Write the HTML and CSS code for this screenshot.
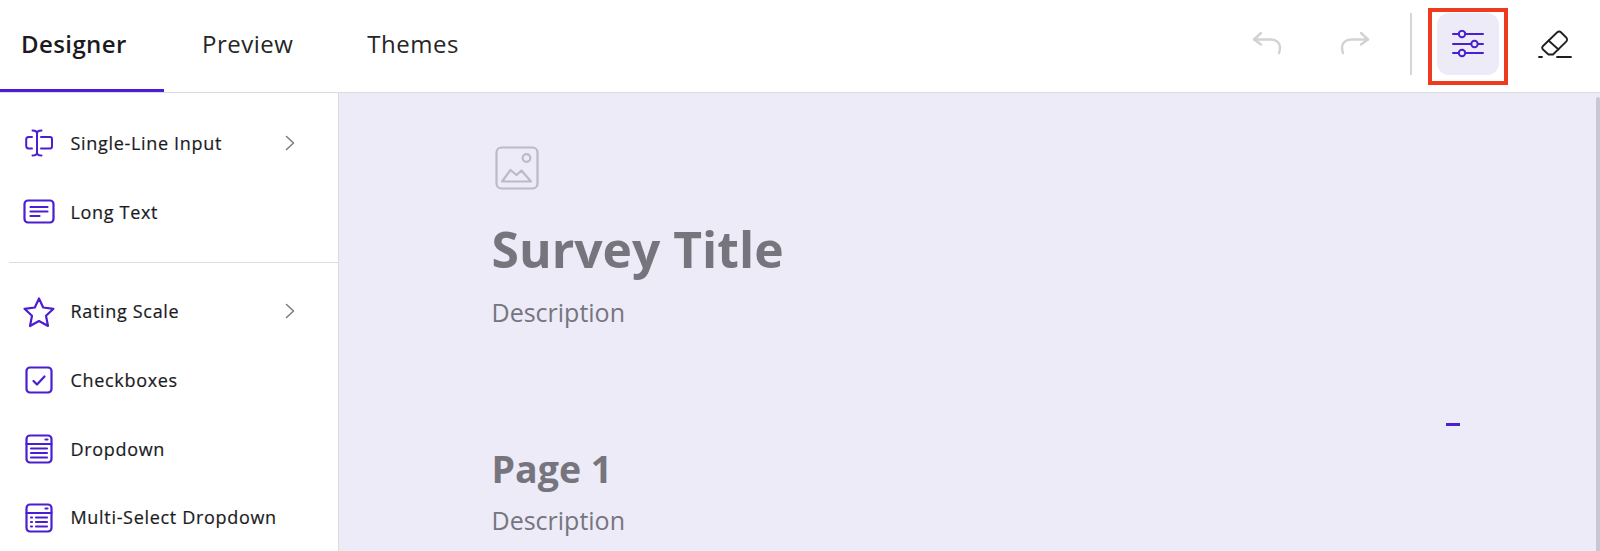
FILE: index.html
```html
<!DOCTYPE html>
<html lang="en">
<head>
  <meta charset="UTF-8">
  <meta name="viewport" content="width=device-width, initial-scale=1.0">
  <title>Survey Designer</title>
  <link rel="stylesheet" href="styles.css">
</head>
<body>
  <header class="topbar">
    <nav class="tabs">
      <a class="tab tab-active">Designer</a>
      <a class="tab tab-preview">Preview</a>
      <a class="tab tab-themes">Themes</a>
    </nav>
    <div class="actions">
      <svg class="history" viewBox="0 0 30 24" width="30" height="24" fill="none" stroke="#d2d2d2" stroke-width="2.4" stroke-linecap="round" stroke-linejoin="round">
        <path d="M9 2 2 8.500l7 5"/>
        <path d="M2 8.500h17c5.500 0 9 3.500 9 8 0 2-.5 4-1 5.500"/>
      </svg>
      <svg class="history" viewBox="0 0 30 24" width="30" height="24" fill="none" stroke="#d2d2d2" stroke-width="2.4" stroke-linecap="round" stroke-linejoin="round">
        <path d="m21 2 7 6.500-7 5"/>
        <path d="M28 8.500H11c-5.500 0-9 3.500-9 8 0 2 .5 4 1 5.500"/>
      </svg>
      <span class="divider"></span>
      <div class="highlight">
        <button class="settings">
          <svg viewBox="0 0 32 28" width="32" height="28" fill="none" stroke="#4b1fd1" stroke-width="2" stroke-linecap="round">
            <path d="M1 4h5M14 4h17M1 14h18M26 14h5M1 23h5M14 23h17"/>
            <circle cx="10" cy="4" r="3.200"/>
            <circle cx="22.500" cy="14" r="3.200"/>
            <circle cx="10" cy="23" r="3.200"/>
          </svg>
        </button>
      </div>
      <svg class="eraser" viewBox="0 0 34 30" width="34" height="30" fill="none" stroke="#1f1f1f" stroke-width="1.800" stroke-linecap="round" stroke-linejoin="round">
        <path d="M5 17 19 3.500c1.300-1.200 3-1.200 4.200 0l5 5c1.200 1.200 1.200 3 0 4.200L15 25.500h-4.500L5 20.500c-1-1-1-2.500 0-3.500Z"/>
        <path d="m10.500 11.500 10 9"/>
        <path d="M1 28h3M19 28h14"/>
      </svg>
    </div>
  </header>

  <div class="workspace">
    <aside class="sidebar">
      <ul class="group">
        <li class="item">
          <svg class="icon" viewBox="0 0 28 28" width="28" height="28" fill="none" stroke="#4b1fd1" stroke-width="2" stroke-linecap="round" stroke-linejoin="round">
            <path d="M7 8H3.500C2 8 1.200 9 1.200 10.500v6C1.200 18 2 19.500 3.500 19.500H7"/>
            <path d="M16 8h9c1.500 0 2 .5 2 2v7.500c0 1.500-.5 2-2 2h-9"/>
            <path d="M7.500 1.500c3 0 4.500 .8 4.500 3v19c0 2.200-1.500 3-4.500 3M16.500 1.500c-3 0-4.500 .8-4.500 3v19c0 2.200 1.500 3 4.500 3"/>
          </svg>
          <span class="label">Single-Line Input</span>
          <svg class="chevron" viewBox="0 0 10 16" width="10" height="16" fill="none" stroke="#7c7c7c" stroke-width="1.500" stroke-linecap="round" stroke-linejoin="round"><path d="m1.500 1.500 7 6.500-7 6.500"/></svg>
        </li>
        <li class="item">
          <svg class="icon" viewBox="0 0 32 26" width="32" height="26" fill="none" stroke="#4b1fd1" stroke-width="2.200" stroke-linecap="round" stroke-linejoin="round">
            <rect x="1.500" y="1.500" width="29" height="22" rx="3.500"/>
            <path d="M7.500 8h17M7.500 12.500h17M7.500 17h9"/>
          </svg>
          <span class="label">Long Text</span>
        </li>
      </ul>
      <hr class="rule">
      <ul class="group">
        <li class="item">
          <svg class="icon" viewBox="0 0 34 32" width="34" height="32" fill="none" stroke="#4b1fd1" stroke-width="2.200" stroke-linejoin="round">
            <path d="M17 2.500 21.200 11.500 31.500 12.800 24 19.800 26 30 17 25 8 30 10 19.800 2.500 12.800 12.800 11.500Z"/>
          </svg>
          <span class="label">Rating Scale</span>
          <svg class="chevron" viewBox="0 0 10 16" width="10" height="16" fill="none" stroke="#7c7c7c" stroke-width="1.500" stroke-linecap="round" stroke-linejoin="round"><path d="m1.500 1.500 7 6.500-7 6.500"/></svg>
        </li>
        <li class="item">
          <svg class="icon" viewBox="0 0 28 28" width="28" height="28" fill="none" stroke="#4b1fd1" stroke-width="2.200" stroke-linecap="round" stroke-linejoin="round">
            <rect x="1.500" y="1.500" width="25" height="25" rx="3.500"/>
            <path d="m8.500 15 3.500 3.500 7.500-8"/>
          </svg>
          <span class="label">Checkboxes</span>
        </li>
        <li class="item">
          <svg class="icon" viewBox="0 0 28 30" width="28" height="30" fill="none" stroke="#4b1fd1" stroke-width="2.200" stroke-linecap="round" stroke-linejoin="round">
            <rect x="1.500" y="1.500" width="25" height="27" rx="3.500"/>
            <path d="M1.500 10h25M6 14.500h16M6 19h16M6 23.500h16M20.500 5.500h2"/>
          </svg>
          <span class="label">Dropdown</span>
        </li>
        <li class="item">
          <svg class="icon" viewBox="0 0 28 30" width="28" height="30" fill="none" stroke="#4b1fd1" stroke-width="2.200" stroke-linecap="round" stroke-linejoin="round">
            <rect x="1.500" y="1.500" width="25" height="27" rx="3.500"/>
            <path d="M1.500 10h25M11 14.500h11M11 19h11M11 23.500h11M6 14.500h1M6 19h1M6 23.500h1M20.500 5.500h2"/>
          </svg>
          <span class="label">Multi-Select Dropdown</span>
        </li>
      </ul>
    </aside>

    <main class="canvas">
      <svg class="logo" viewBox="0 0 44 44" width="44" height="44" fill="none" stroke="#bbbac6" stroke-width="2.200" stroke-linecap="round" stroke-linejoin="round">
        <rect x="1.500" y="1.500" width="41" height="41" rx="5"/>
        <circle cx="31.500" cy="12" r="3.800"/>
        <path d="M7 35.500 15.500 24l6 5 5-4.500L36 35.500Z"/>
      </svg>
      <h1 class="survey-title">Survey Title</h1>
      <p class="description">Description</p>
      <h2 class="page-title">Page 1</h2>
      <p class="description description-page">Description</p>
      <span class="dash"></span>
      <span class="scrollbar"></span>
    </main>
  </div>
</body>
</html>
```

FILE: styles.css
```css
* {
  box-sizing: border-box;
}
html, body {
  height: 100%;
}
body {
  margin: 0;
  font-family: "Open Sans", "Noto Sans", sans-serif;
  color: #1b1b1f;
  background: #fff;
  overflow: hidden;
  display: flex;
  flex-direction: column;
}

/* top bar */
.topbar {
  height: 93px;
  flex: none;
  display: flex;
  justify-content: space-between;
  border-bottom: 1px solid #dcdce0;
}
.tabs {
  display: flex;
}
.tab {
  font-size: 24px;
  line-height: 88px;
  height: 92px;
  letter-spacing: .5px;
  color: #262626;
}
.tab-active {
  width: 164px;
  padding-left: 21px;
  font-weight: 600;
  letter-spacing: .4px;
  color: #1b1b1f;
  border-bottom: 3px solid #4b1fd1;
}
.tab-preview {
  margin-left: 38px;
}
.tab-themes {
  margin-left: 74px;
}
.actions {
  display: flex;
  align-items: flex-start;
  padding-right: 28px;
}
.history {
  margin-top: 31px;
  margin-right: 58px;
}
.history + .history {
  margin-right: 40px;
}
.divider {
  width: 2px;
  height: 62px;
  margin-top: 13px;
  background: #d5d5d8;
}
.highlight {
  width: 80px;
  height: 77px;
  margin: 8px 30px 0 16px;
  padding: 1px 0 0 5px;
  border: 4px solid #ee3a1f;
}
.settings {
  width: 62px;
  height: 62px;
  display: flex;
  align-items: center;
  justify-content: center;
  padding: 0;
  border: none;
  border-radius: 12px;
  background: #ecebf7;
}
.eraser {
  margin-top: 29px;
}

/* body */
.workspace {
  flex: 1;
  display: flex;
  min-height: 0;
}
.sidebar {
  width: 339px;
  flex: none;
  padding-top: 16px;
  border-right: 1px solid #dcdce0;
}
.group {
  list-style: none;
  margin: 0;
  padding: 0;
}
.item {
  height: 68.700px;
  display: flex;
  align-items: center;
  position: relative;
  padding-left: 70.500px;
  padding-bottom: 1px;
  font-size: 18px;
  font-weight: 500;
  letter-spacing: .68px;
  -webkit-text-stroke: .2px #1b1b1f;
}
.icon {
  position: absolute;
  left: 39px;
  top: 50%;
  transform: translate(-50%, -50%);
}
.chevron {
  position: absolute;
  left: 285px;
  top: 26px;
}
.rule {
  height: 1px;
  margin: 16px 0 14px 9px;
  border: none;
  background: #dcdce0;
}

/* survey canvas */
.canvas {
  flex: 1;
  position: relative;
  padding: 53px 0 0 152.500px;
  background: #ecebf7;
  overflow: hidden;
  color: #76757e;
}
.logo {
  display: block;
  margin-left: 3px;
}
.survey-title {
  margin: 25px 0 0;
  font-size: 49.800px;
  line-height: 68px;
  font-weight: 700;
}
.page-title {
  margin: 114px 0 0;
  font-size: 37.500px;
  line-height: 51px;
  font-weight: 700;
}
.description {
  margin: 12px 0 0;
  font-size: 25px;
  line-height: 34px;
}
.description-page {
  margin-top: 9px;
}
.dash {
  position: absolute;
  left: 1107px;
  top: 330px;
  width: 14px;
  height: 3px;
  background: #4b1fd1;
}
.scrollbar {
  position: absolute;
  right: 0;
  top: 4px;
  bottom: 0;
  width: 4px;
  border-radius: 2px 2px 0 0;
  background: #c9c8d2;
}
```
